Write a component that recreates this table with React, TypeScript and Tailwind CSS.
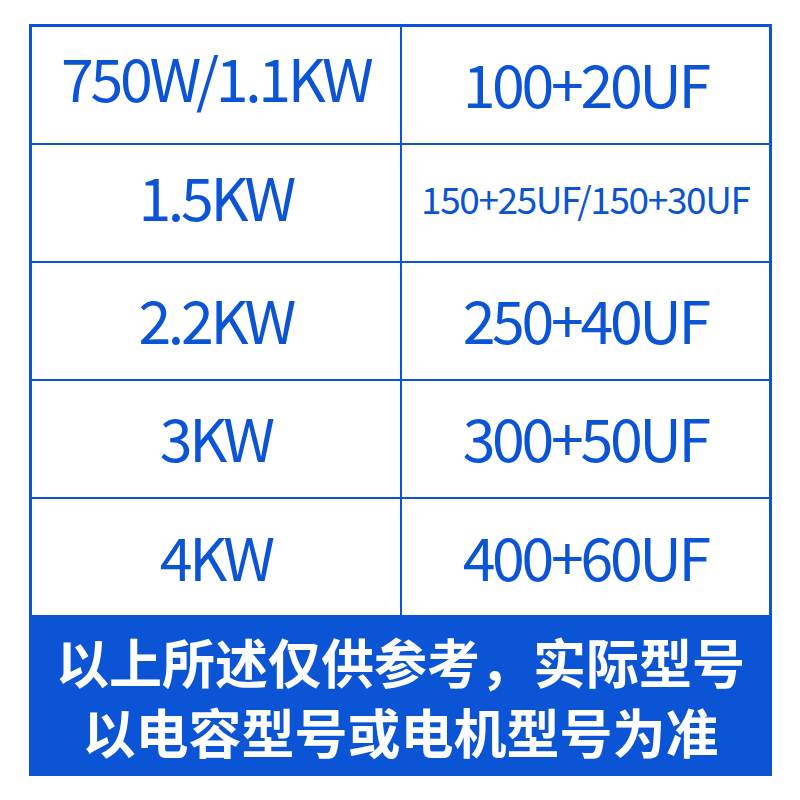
import React from "react";

type Cell = { text: string; cls: string };

const rows: [Cell, Cell][] = [
  [
    { text: "750W/1.1KW", cls: "text-[59px] tracking-[-3.3px] pb-[17px]" },
    { text: "100+20UF", cls: "text-[59px] tracking-[-3.3px] pb-[6px]" },
  ],
  [
    { text: "1.5KW", cls: "text-[59px] tracking-[-3.3px] pb-[16px]" },
    { text: "150+25UF/150+30UF", cls: "text-[37px] tracking-[-1.4px] pb-[9px]" },
  ],
  [
    { text: "2.2KW", cls: "text-[59px] tracking-[-3.3px] pb-[6px]" },
    { text: "250+40UF", cls: "text-[59px] tracking-[-3.3px] pb-[6px]" },
  ],
  [
    { text: "3KW", cls: "text-[59px] tracking-[-3.3px] pb-[6px]" },
    { text: "300+50UF", cls: "text-[59px] tracking-[-3.3px] pb-[6px]" },
  ],
  [
    { text: "4KW", cls: "text-[59px] tracking-[-3.3px] pb-[3px]" },
    { text: "400+60UF", cls: "text-[59px] tracking-[-3.3px] pb-[3px]" },
  ],
];

export default function App() {
  return (
    <div
      className="w-[800px] h-[800px] bg-white relative"
      style={{ fontFamily: '"Noto Sans CJK SC", "Noto Sans", sans-serif' }}
    >
      <div className="absolute left-[29px] top-[24px] w-[743px] bg-[#0b54d6] pt-[3px] px-[3px] flex flex-col">
        <div className="grid grid-cols-2 gap-[2px]">
          {rows.map((r, i) => (
            <React.Fragment key={i}>
              {r.map((c, j) => (
                <div
                  key={j}
                  className={
                    "h-[116px] bg-white flex items-center justify-center text-[#0b54d6] leading-none whitespace-nowrap " +
                    c.cls
                  }
                >
                  {c.text}
                </div>
              ))}
            </React.Fragment>
          ))}
        </div>
        <div className="h-[161px] flex flex-col items-center justify-center text-white font-bold text-[53px] leading-[70px]">
          <div>以上所述仅供参考，实际型号</div>
          <div>以电容型号或电机型号为准</div>
        </div>
      </div>
    </div>
  );
}
